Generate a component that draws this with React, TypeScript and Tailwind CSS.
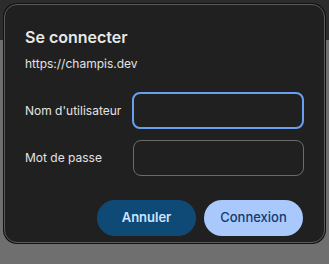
import React from "react";

export default function App() {
  return (
    <div
      className="relative w-[329px] h-[264px] overflow-hidden"
      style={{ fontFamily: "Inter, 'Liberation Sans', sans-serif" }}
    >
      {/* page behind the dialog */}
      <div className="flex flex-col h-full">
        <div className="h-[40px] bg-[#2c2c2c]" />
        <div className="flex-1 bg-[#6f6f6f]" />
      </div>

      {/* dialog */}
      <div className="absolute left-[4px] top-[4px] w-[321px] h-[239px] rounded-[13px] bg-[#202020] border border-[#5a5a5a] shadow-[0_0_0_1px_#111] px-[20px] pt-[21px]">
        <h1 className="text-[16px] font-semibold text-[#e8e8e8] leading-[22px]">Se connecter</h1>
        <p className="mt-[7px] text-[12px] text-[#e3e3e3] leading-[18px]">https://champis.dev</p>

        <div className="mt-[19px] flex flex-col gap-[11px]">
          <div className="flex items-center">
            <label className="w-[109px] text-[12px] text-[#e3e3e3]">Nom d'utilisateur</label>
            <input
              className="w-[172px] h-[37px] rounded-[8px] bg-transparent border-2 border-[#6a9ff0] outline-none"
              autoFocus
            />
          </div>
          <div className="flex items-center">
            <label className="w-[109px] text-[12px] text-[#e3e3e3]">Mot de passe</label>
            <input
              type="password"
              className="w-[171px] h-[36px] rounded-[8px] bg-transparent border border-[#6b6b6b] outline-none"
            />
          </div>
        </div>

        <div className="mt-[24px] flex justify-end gap-[8px] pr-[1px]">
          <button className="w-[99px] h-[36px] rounded-full bg-[#0f4a76] text-[#cfe2ff] text-[13px] font-semibold">
            Annuler
          </button>
          <button className="w-[99px] h-[36px] rounded-full bg-[#a9c8fb] text-[#123a6e] text-[13px] font-medium">
            Connexion
          </button>
        </div>
      </div>
    </div>
  );
}
